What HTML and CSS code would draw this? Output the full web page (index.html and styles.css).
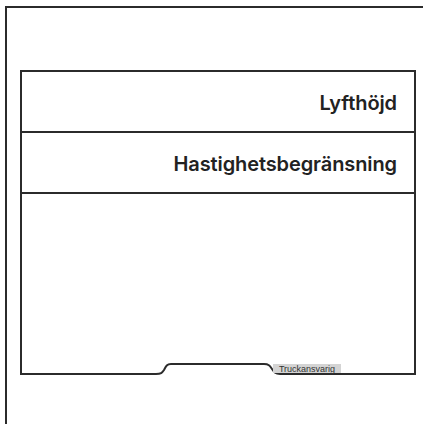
FILE: index.html
```html
<!DOCTYPE html>
<html lang="sv">
<head>
    <meta charset="UTF-8">
    <meta name="viewport" content="width=device-width, initial-scale=1.0">
    <title>Truck</title>
    <link rel="stylesheet" href="styles.css">
</head>
<body>
    <div class="frame">
        <div class="panel">
            <div class="row">Lyfthöjd</div>
            <div class="row">Hastighetsbegränsning</div>
            <div class="space"></div>
        </div>
        <div class="foot">
            <svg width="396" height="14" viewBox="0 0 396 14">
                <path d="M1 0 V13 H136 C141 13 142 12 144 9 C146 5 147 3 151 3 H244 C249 3 250 5 252 8 C254 11 255 13 260 13 H395 V0" fill="none" stroke="#2b2b2b" stroke-width="2"/>
            </svg>
            <span class="tag">Truckansvarig</span>
        </div>
    </div>
</body>
</html>
```

FILE: styles.css
```css
body {
    margin: 0;
    background: #fff;
    font-family: Inter, "Liberation Sans", sans-serif;
    color: #222;
}
.frame {
    box-sizing: border-box;
    margin: 6px 0 0 5px;
    width: 418px;
    height: 418px;
    border-left: 2px solid #2b2b2b;
    border-top: 2px solid #2b2b2b;
    padding: 62px 0 0 13px;
}
.panel {
    width: 392px;
    border: 2px solid #2b2b2b;
    border-bottom: none;
}
.row {
    height: 59px;
    border-bottom: 2px solid #2b2b2b;
    display: flex;
    align-items: center;
    justify-content: flex-end;
    padding: 3px 17px 0 0;
    box-sizing: border-box;
    height: 61px;
    font-size: 20px;
    font-weight: 600;
    letter-spacing: -0.1px;
}
.space {
    height: 167px;
}
.foot {
    position: relative;
    width: 396px;
    height: 14px;
}
.foot svg {
    display: block;
}
.tag {
    position: absolute;
    left: 253px;
    top: 3px;
    width: 68px;
    height: 9px;
    background: #d4d4d4;
    font-family: "Liberation Sans", sans-serif;
    font-size: 9px;
    line-height: 10px;
    color: #333;
    text-align: center;
}
```
